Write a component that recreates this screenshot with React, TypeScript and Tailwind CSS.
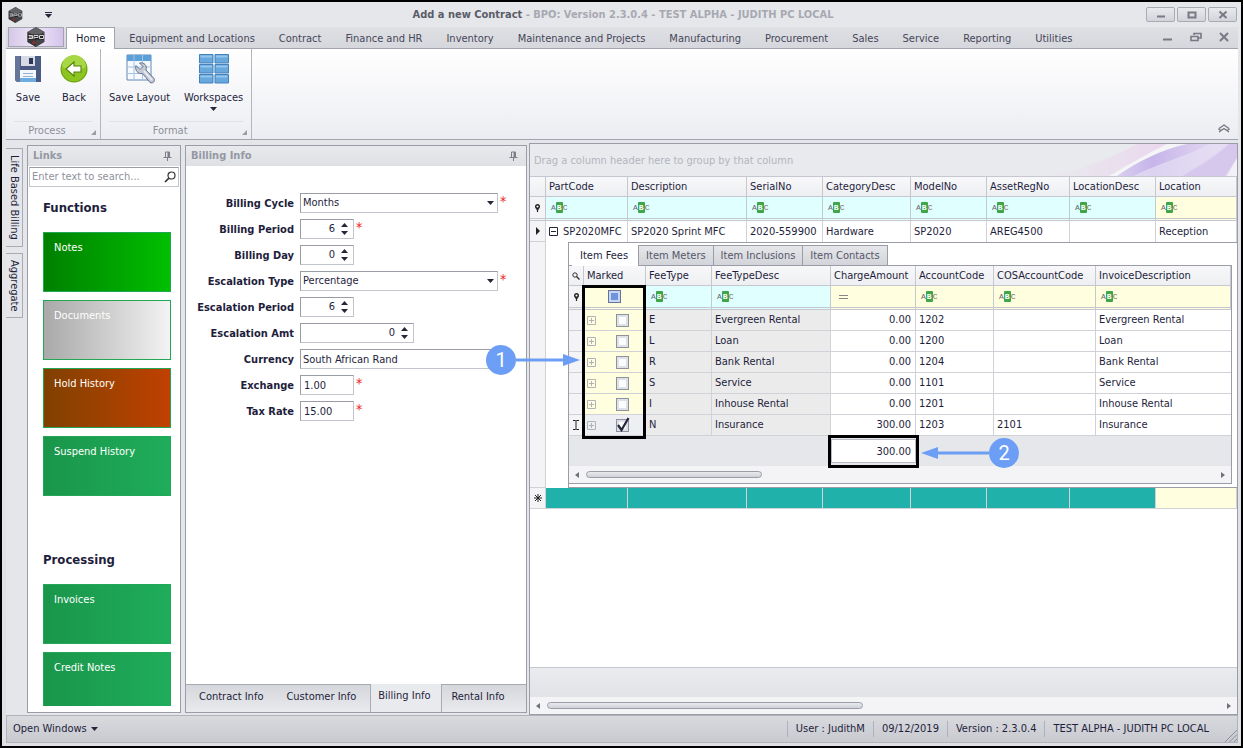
import { ReactNode, useState } from "react";
import clsx from "clsx";

const ribbonTabs = ["Equipment and Locations", "Contract", "Finance and HR", "Inventory", "Maintenance and Projects", "Manufacturing", "Procurement", "Sales", "Service", "Reporting", "Utilities"];

const functionTiles = [
    { label: "Notes", color: "from-[#008000] to-[#00c000]" },
    { label: "Documents", color: "from-[#a9a9a9] to-[#f3f3f3]" },
    { label: "Hold History", color: "from-[#804000] to-[#c04000]" },
    { label: "Suspend History", color: "from-[#1a964b] to-[#1fad5b]" },
];

const processingTiles = [
    { label: "Invoices", color: "from-[#1a964b] to-[#1fad5b]" },
    { label: "Credit Notes", color: "from-[#1a964b] to-[#1fad5b]" },
];

const itemColumns = [
    { name: "PartCode", width: "w-[82px]" },
    { name: "Description", width: "w-[119px]" },
    { name: "SerialNo", width: "w-[76px]" },
    { name: "CategoryDesc", width: "w-[88px]" },
    { name: "ModelNo", width: "w-[76px]" },
    { name: "AssetRegNo", width: "w-[83px]" },
    { name: "LocationDesc", width: "w-[86px]" },
    { name: "Location", width: "" },
];

const feeColumns = [
    { name: "FeeType", width: "w-[66px]" },
    { name: "FeeTypeDesc", width: "w-[119px]" },
    { name: "ChargeAmount", width: "w-[85px]" },
    { name: "AccountCode", width: "w-[78px]" },
    { name: "COSAccountCode", width: "w-[102px]" },
    { name: "InvoiceDescription", width: "" },
];

const fees = [
    { type: "E", desc: "Evergreen Rental", amount: "0.00", account: "1202", cos: "", marked: false },
    { type: "L", desc: "Loan", amount: "0.00", account: "1200", cos: "", marked: false },
    { type: "R", desc: "Bank Rental", amount: "0.00", account: "1204", cos: "", marked: false },
    { type: "S", desc: "Service", amount: "0.00", account: "1101", cos: "", marked: false },
    { type: "I", desc: "Inhouse Rental", amount: "0.00", account: "1201", cos: "", marked: false },
    { type: "N", desc: "Insurance", amount: "300.00", account: "1203", cos: "2101", marked: true },
];

const headBase = "h-5 border-r border-b border-[#c6c8d0] bg-linear-to-b from-[#f8f8fa] to-[#eeeff2]";
const headCell = clsx(headBase, "pl-[3px] text-left font-normal whitespace-nowrap overflow-hidden");
const filterCell = "h-6 border-r border-r-[#c6c8d0] border-b-3 border-b-[#c6c8d0] border-double";
const bodyBase = "h-[21px] border-r border-b border-[#d0d2d8]";
const bodyCell = clsx(bodyBase, "pl-[3px] pr-1 whitespace-nowrap");

const BpoLogo = ({ className }: { className: string }) => (
    <svg viewBox="0 0 18 20" className={className} aria-hidden="true">
        <path d="M9 0 17.5 5V15L9 20 .5 15V5Z" fill="#45454a" />
        <path d="M9 0 17.5 5 9 9.5 .5 5Z" fill="#626267" />
        <path d="M9 10V20L.5 15V5Z" fill="#38383c" />
        <path d="M1 7.5H17V12.5H1Z" fill="#222" />
        <path d="M1.5 8.5H5.5V11.5H1.5M2 10H5M7 12V8.5H11V10.5H7.5M12.5 8.5H16.5V11.5H12.5Z" fill="none" stroke="#e8e8e8" strokeWidth=".9" />
        <path d="M6 14 9 16M5 15.5 7.5 17" stroke="#b33" strokeWidth="1" />
    </svg>
);

const PinIcon = () => (
    <svg viewBox="0 0 9 10" className="w-[9px] h-2.5" aria-hidden="true">
        <path d="M2.5 1H6.5V6M2.5 1V6M.5 6.5H8.5M4.5 7V10" fill="none" stroke="#7c7e88" />
        <path d="M4.500 1H7V6H4.500Z" fill="#7c7e88" />
    </svg>
);

const Caret = ({ up = false, className = "" }: { up?: boolean; className?: string }) => (
    <svg viewBox="0 0 7 4" className={clsx("w-[7px] h-1", className)} aria-hidden="true">
        <path d={up ? "M0 4 3.5 0 7 4Z" : "M0 0H7L3.5 4Z"} fill="#26263a" />
    </svg>
);

const FilterPin = () => (
    <svg viewBox="0 0 7 8" className="w-[7px] h-2 mx-auto" aria-hidden="true">
        <circle cx="3.5" cy="2.5" r="1.8" fill="none" stroke="#222" strokeWidth="1.4" />
        <path d="M3.5 4V8M2 4.8H5" stroke="#222" strokeWidth="1.2" />
    </svg>
);

const AbcIcon = () => (
    <span className="flex items-center pl-[5px] font-['Liberation_Mono',monospace] text-[8px] leading-[11px] text-[#666]" aria-hidden="true">
        A<span className="bg-[#3fa549] text-white font-bold px-px rounded-[1px]">B</span>C
    </span>
);

const ExpandBox = ({ open = false, dim = false }: { open?: boolean; dim?: boolean }) => (
    <svg viewBox="0 0 9 9" className={clsx("w-[9px] h-[9px]", dim ? "text-[#b0b2b8]" : "text-[#26263a]")} aria-hidden="true">
        <path d={open ? "M.5.5H8.5V8.5H.5ZM2 4.5H7" : "M.5.5H8.5V8.5H.5ZM2 4.5H7M4.5 2V7"} fill="none" stroke="currentColor" />
    </svg>
);

const Tick = ({ label, defaultChecked }: { label: string; defaultChecked: boolean }) => (
    <span className="relative flex">
        <input type="checkbox" aria-label={label} defaultChecked={defaultChecked} className="peer appearance-none w-[13px] h-[13px] border border-[#8e929e] bg-[#fdfdfd] shadow-[inset_0_0_0_2px_#dfe1e8]" />
        <svg viewBox="0 0 14 15" className="hidden peer-checked:block absolute left-0 -top-0.5 w-3.5 h-[15px] pointer-events-none" aria-hidden="true">
            <path d="M2 8 5.5 13 12.5 1" fill="none" stroke="#26263a" strokeWidth="2.2" />
        </svg>
    </span>
);

const ScrollBar = ({ thumb }: { thumb: string }) => (
    <div className="flex items-center h-[17px] bg-[#f4f4f7] px-1.5 gap-[7px]">
        <svg viewBox="0 0 4 6" className="w-1 h-1.5" aria-hidden="true"><path d="M4 0V6L0 3Z" fill="#6f717b" /></svg>
        <div className="flex-1">
            <div className={clsx("h-[7px] rounded-full border border-[#9a9ca6] bg-linear-to-b from-[#e9eaee] to-[#d0d2d9]", thumb)} />
        </div>
        <svg viewBox="0 0 4 6" className="w-1 h-1.5" aria-hidden="true"><path d="M0 0V6L4 3Z" fill="#6f717b" /></svg>
    </div>
);

const PanelHeader = ({ title }: { title: string }) => (
    <div className="flex items-center justify-between h-5 pl-[5px] pr-2 bg-linear-to-b from-[#e9eaed] to-[#dfe0e4]">
        <h2 className="font-bold text-[#9598a3]">{title}</h2>
        <button type="button" aria-label={`Pin ${title}`}><PinIcon /></button>
    </div>
);

const Tile = ({ label, color }: { label: string; color: string }) => (
    <button type="button" className={clsx("flex h-15 w-full shrink-0 items-start border border-[#22a757] bg-linear-to-r px-2.5 py-[7px] text-left text-white", color)}>{label}</button>
);

const RibbonButton = ({ label, icon, menu = false }: { label: string; icon: ReactNode; menu?: boolean }) => (
    <button type="button" className="flex flex-col items-center h-16 whitespace-nowrap">
        <span className="flex h-8 items-center">{icon}</span>
        <span className="mt-[5px]">{label}</span>
        {menu && <Caret className="mt-px" />}
    </button>
);

const RibbonGroup = ({ title, children }: { title: string; children: ReactNode }) => (
    <div className="relative flex flex-col justify-between border-r border-[#b4b6be] pt-1">
        <div className="flex gap-3.5 px-2">{children}</div>
        <div className="mx-2 border-t border-[#e0e1e6] pr-3 text-center text-[#8d909b] leading-[17px]">{title}</div>
        <svg viewBox="0 0 5 5" className="absolute right-1 bottom-1 w-[5px] h-[5px]" aria-hidden="true"><path d="M5 0V5H0Z" fill="#9b9da6" /></svg>
    </div>
);

const Field = ({ id, label, required = false, children }: { id: string; label: string; required?: boolean; children: ReactNode }) => (
    <div className="flex items-center h-5">
        <label htmlFor={id} className="w-[108px] shrink-0 pt-0.5 text-right font-bold whitespace-nowrap">{label}</label>
        <div className="ml-1.5 flex">{children}</div>
        {required && <span className="ml-0.5 self-start text-sm leading-4 text-[#f02020]">*</span>}
    </div>
);

const fieldBox = "h-5 border border-[#c3c5cd] border-t-[#9a9ca6] border-l-[#9a9ca6] bg-white";

const SelectBox = ({ id, value }: { id: string; value: string }) => (
    <span className="relative flex items-center">
        <select id={id} defaultValue={value} className={clsx(fieldBox, "w-[198px] appearance-none pl-0.5")}>
            <option>{value}</option>
        </select>
        <Caret className="absolute right-1 pointer-events-none" />
    </span>
);

const SpinBox = ({ id, start, width }: { id: string; start: number; width: string }) => {
    const [value, setValue] = useState(start);
    return (
        <span className={clsx(fieldBox, "flex items-center", width)}>
            <input id={id} value={value} onChange={(e) => setValue(Number(e.target.value) || 0)} className="w-full min-w-0 text-right outline-none" />
            <span className="flex w-[18px] shrink-0 flex-col items-center gap-1">
                <button type="button" aria-label="Increase" onClick={() => setValue(value + 1)}><Caret up className="block" /></button>
                <button type="button" aria-label="Decrease" onClick={() => setValue(value - 1)}><Caret className="block" /></button>
            </span>
        </span>
    );
};

const TitleBar = () => (
    <header>
        <div className="grid h-[25px] grid-cols-[1fr_auto_1fr] items-center pl-0.5">
            <div className="flex items-center">
                <BpoLogo className="w-[15px] h-4" />
                <button type="button" aria-label="Customize toolbar" className="ml-5.5">
                    <svg viewBox="0 0 7 6" className="w-[7px] h-1.5" aria-hidden="true"><path d="M0 .5H7" stroke="#26263a" /><path d="M0 2H7L3.5 6Z" fill="#26263a" /></svg>
                </button>
            </div>
            <h1 className="font-bold text-[#a7a9b2]"><span className="text-[#5a5c68]">Add a new Contract</span> - BPO: Version 2.3.0.4 - TEST ALPHA - JUDITH PC LOCAL</h1>
            <div className="flex justify-end gap-0.5 pr-px text-[#777984]">
                {["M4 7.5H12", "M4.5 3.5H11.5V8.5H4.5Z", "M4.5 2.5 11.5 9M11.5 2.5 4.5 9"].map((d, i) => (
                    <button key={d} type="button" aria-label={["Minimize", "Maximize", "Close"][i]} className="flex h-[15px] w-[29px] items-center justify-center rounded-xs border border-[#a9abb4] bg-linear-to-b from-[#e9eaed] to-[#d3d4da]">
                        <svg viewBox="0 0 16 12" className="w-4 h-3"><path d={d} fill="none" stroke="currentColor" strokeWidth="2" /></svg>
                    </button>
                ))}
            </div>
        </div>
        <nav className="flex h-[22px] items-end border-b border-[#a3a5ae] bg-linear-to-b from-[#dfe0e4] to-[#d6d7dc] text-[#45465a]">
            <button type="button" aria-label="Application menu" className="mb-px ml-0.5 flex h-5 w-[56px] items-center justify-center border border-[#a3a5ae] bg-linear-to-r from-[#d5c8e8] via-[#efe6f8] to-[#d3c3ec]">
                <BpoLogo className="w-[18px] h-5" />
            </button>
            <a href="#home" className="-mb-px ml-0.5 h-[22px] border border-b-0 border-[#a3a5ae] bg-white px-[9px] leading-[22px] text-[#1e1e3c]">Home</a>
            {ribbonTabs.map((tab, i) => (
                <a key={tab} href={`#${i}`} className={clsx("px-3 leading-[18px] whitespace-nowrap", i === 0 && "ml-0.5")}>{tab}</a>
            ))}
            <div className="ml-auto mb-1.5 flex gap-4 pr-2 text-[#777984]">
                <button type="button" aria-label="Minimize window"><svg viewBox="0 0 12 10" className="w-3 h-2.5"><path d="M1 7.5H10" stroke="currentColor" strokeWidth="2" /></svg></button>
                <button type="button" aria-label="Restore window"><svg viewBox="0 0 12 10" className="w-3 h-2.5"><path d="M4 3V1.5H11V6H8.5M1 4.5H8V8.5H1Z" fill="none" stroke="currentColor" strokeWidth="1.6" /></svg></button>
                <button type="button" aria-label="Close window"><svg viewBox="0 0 12 10" className="w-3 h-2.5"><path d="M2 1 10 9M10 1 2 9" stroke="currentColor" strokeWidth="2" /></svg></button>
            </div>
        </nav>
    </header>
);

const Ribbon = () => (
    <section className="flex h-[91px] border-b border-[#a3a5ae] bg-linear-to-b from-white to-[#ecedf2]">
        <RibbonGroup title="Process">
            <RibbonButton label="Save" icon={
                <svg viewBox="0 0 28 28" className="w-7 h-7" aria-hidden="true">
                    <path d="M1 1H27V27H3L1 25Z" fill="#4a5a80" />
                    <path d="M1 1H6V27H3L1 25Z" fill="#65759a" />
                    <path d="M7 1H21V11H7Z" fill="#d5dae4" />
                    <path d="M15 3H19V9H15Z" fill="#2b3555" />
                    <path d="M6 15H22V27H6Z" fill="#f4f8fc" />
                    <path d="M6 23H22V27H6Z" fill="#6cacdf" />
                    <path d="M9 18.5H19M9 21.5H19" stroke="#8fb2d6" />
                </svg>
            } />
            <RibbonButton label="Back" icon={
                <svg viewBox="0 0 28 28" className="w-7 h-7 mx-1" aria-hidden="true">
                    <circle cx="14" cy="14" r="13.5" fill="#6fa312" />
                    <circle cx="14" cy="14" r="12.3" fill="#8cc520" />
                    <path d="M2 12A12 12 0 0 1 26 12C20 16 8 15 2 12Z" fill="#a7d843" />
                    <path d="M6 14 14 7V11H21V17H14V21Z" fill="#fff" stroke="#54800b" strokeWidth="1.1" />
                </svg>
            } />
        </RibbonGroup>
        <RibbonGroup title="Format">
            <RibbonButton label="Save Layout" icon={
                <svg viewBox="0 0 30 30" className="w-7.5 h-7.5" aria-hidden="true">
                    <path d="M2 1H26V26H2Z" fill="#f6f9fd" stroke="#6685b5" />
                    <path d="M2 1H26V7H2Z" fill="#5ba0d8" />
                    <path d="M2 13H26M2 19.5H26M9 1V26M17.5 1V26" stroke="#a5c2e2" />
                    <path d="M11 11.5 15 15.5 18 12.5 14.5 9C19 8 22.5 11.5 21 16L29 24.5C30.5 27 28 30 25 28.5L17.5 19.5C13 20.5 9.5 16 11 11.5Z" fill="#c3cad6" stroke="#65728a" />
                    <path d="M19 17 27 26" stroke="#eef1f5" strokeWidth="1.5" />
                </svg>
            } />
            <RibbonButton label="Workspaces" menu icon={
                <svg viewBox="0 0 30 30" className="w-7.5 h-7.5" aria-hidden="true">
                    {[0.5, 10.5, 20.5].map((y) => (
                        <g key={y} fill="#69a8dc" stroke="#4381bd">
                            <path d={`M.5 ${y}H14V${y + 8.5}H.5ZM16 ${y}H29.5V${y + 8.5}H16Z`} />
                            <path d={`M1.5 ${y + 2}H13M17 ${y + 2}H28.5`} stroke="#94c5ec" strokeWidth="2" />
                        </g>
                    ))}
                </svg>
            } />
        </RibbonGroup>
        <button type="button" aria-label="Collapse ribbon" className="ml-auto mr-2 mb-1.5 self-end">
            <svg viewBox="0 0 12 9" className="w-3 h-[9px]"><path d="M1 4.5 6 1 11 4.5M1 8 6 4.5 11 8M1 4.5V5.5L3 6M11 4.5V5.5L9 6" fill="none" stroke="#73757f" strokeWidth="1.2" /></svg>
        </button>
    </section>
);

const LinksPanel = () => (
    <aside className="my-0.5 flex w-[154px] shrink-0 flex-col border border-[#9a9ca8] bg-white">
        <PanelHeader title="Links" />
        <div className="mx-px mt-px flex h-5 items-center border border-[#c3c5cd] border-t-[#9a9ca6] pr-0.5">
            <input aria-label="Search links" placeholder="Enter text to search..." className="w-full min-w-0 px-0.5 outline-none placeholder:text-[#8f929c]" />
            <svg viewBox="0 0 12 12" className="w-3 h-3 shrink-0" aria-hidden="true"><circle cx="7.5" cy="4.5" r="3.5" fill="none" stroke="#333" strokeWidth="1.2" /><path d="M5 7 1 11" stroke="#333" strokeWidth="1.7" /></svg>
        </div>
        <div className="mb-1.5 flex min-h-0 flex-1 flex-col gap-2 overflow-hidden pt-[11px] pr-[9px] pl-[15px]">
            <h3 className="mb-1.5 shrink-0 text-[13px] leading-5 font-bold">Functions</h3>
            {functionTiles.map((tile) => <Tile key={tile.label} {...tile} />)}
            <h3 className="mt-[46px] mb-1.5 shrink-0 text-[13px] leading-5 font-bold">Processing</h3>
            {processingTiles.map((tile) => <Tile key={tile.label} {...tile} />)}
        </div>
    </aside>
);

const BillingPanel = () => (
    <section className="my-0.5 mr-0.5 ml-1 flex w-[342px] shrink-0 flex-col border border-[#9a9ca8] bg-white">
        <PanelHeader title="Billing Info" />
        <form className="flex flex-1 flex-col gap-1.5 pt-[27px]">
            <Field id="cycle" label="Billing Cycle" required><SelectBox id="cycle" value="Months" /></Field>
            <Field id="period" label="Billing Period" required><SpinBox id="period" start={6} width="w-[54px]" /></Field>
            <Field id="day" label="Billing Day"><SpinBox id="day" start={0} width="w-[54px]" /></Field>
            <Field id="esc-type" label="Escalation Type" required><SelectBox id="esc-type" value="Percentage" /></Field>
            <Field id="esc-period" label="Escalation Period"><SpinBox id="esc-period" start={6} width="w-[54px]" /></Field>
            <Field id="esc-amt" label="Escalation Amt"><SpinBox id="esc-amt" start={0} width="w-[114px]" /></Field>
            <Field id="currency" label="Currency"><input id="currency" defaultValue="South African Rand" className={clsx(fieldBox, "w-[198px] px-0.5")} /></Field>
            <Field id="exchange" label="Exchange" required><input id="exchange" defaultValue="1.00" className={clsx(fieldBox, "w-[54px] px-[3px]")} /></Field>
            <Field id="tax" label="Tax Rate" required><input id="tax" defaultValue="15.00" className={clsx(fieldBox, "w-[54px] px-[3px]")} /></Field>
        </form>
        <div className="flex h-7 bg-[#e9eaed]">
            <div className="flex border-t border-r border-[#a9abb4] bg-linear-to-b from-[#d6d7dc] to-[#e9eaed] pb-1">
                <button type="button" className="px-[13px]">Contract Info</button>
                <button type="button" className="pr-3.5 pl-2.5">Customer Info</button>
            </div>
            <button type="button" className="w-[70px] pr-1 pb-1">Billing Info</button>
            <div className="flex flex-1 border-t border-l border-[#a9abb4] bg-linear-to-b from-[#d6d7dc] to-[#e9eaed] pb-1">
                <button type="button" className="px-[9px]">Rental Info</button>
            </div>
        </div>
    </section>
);

const FeesTable = () => (
    <table className="w-full table-fixed border-separate border-spacing-0">
        <colgroup>
            <col className="w-[15px]" />
            <col className="w-[62px]" />
            {feeColumns.map((c) => <col key={c.name} className={c.width} />)}
        </colgroup>
        <thead>
            <tr>
                <th className={headBase} aria-label="Find">
                    <svg viewBox="0 0 8 8" className="w-2 h-2 mx-auto" aria-hidden="true"><circle cx="3" cy="3" r="2.2" fill="none" stroke="#333" /><path d="M4.5 4.5 7.5 7.5" stroke="#333" strokeWidth="1.4" /></svg>
                </th>
                <th className={headCell}>Marked</th>
                {feeColumns.map((c) => <th key={c.name} className={headCell}>{c.name}</th>)}
            </tr>
            <tr>
                <td className={clsx(filterCell, "bg-[#f4f4f7]")}><FilterPin /></td>
                <td className={clsx(filterCell, "bg-[#ffffe0]")}>
                    <input type="checkbox" aria-label="Filter marked" className="mx-auto block h-[13px] w-[13px] appearance-none border border-[#66749a] bg-[#6d94dc] shadow-[inset_0_0_0_2px_#c9d8f2]" />
                </td>
                {feeColumns.map((c, i) => (
                    <td key={c.name} className={clsx(filterCell, i < 2 ? "bg-[#e0ffff]" : "bg-[#ffffe0]")}>
                        {c.name === "ChargeAmount" ? (
                            <svg viewBox="0 0 9 4" className="ml-2 h-1 w-[9px]" aria-hidden="true"><path d="M0 .5H9M0 3.5H9" stroke="#85878c" /></svg>
                        ) : <AbcIcon />}
                    </td>
                ))}
            </tr>
        </thead>
        <tbody>
            {fees.map((fee) => (
                <tr key={fee.type}>
                    <td className={clsx(bodyBase, "bg-[#f4f4f7]")}>
                        {fee.marked && <svg viewBox="0 0 6 10" className="mx-auto w-1.5 h-2.5" aria-hidden="true"><path d="M0 .5H2.5L3 1 3.5 .5H6M3 1V9M0 9.5H2.5L3 9 3.5 9.5H6" fill="none" stroke="#222" /></svg>}
                    </td>
                    <td className={clsx(bodyCell, fee.marked ? "bg-[#eeeff2]" : "bg-[#ffffe0]")}>
                        <div className="flex items-center gap-5"><ExpandBox dim /><Tick label={`Mark ${fee.desc}`} defaultChecked={fee.marked} /></div>
                    </td>
                    <td className={clsx(bodyCell, "bg-[#ebebeb]")}>{fee.type}</td>
                    <td className={clsx(bodyCell, "bg-[#ebebeb]")}>{fee.desc}</td>
                    <td className={clsx(bodyCell, "bg-white text-right")}>{fee.amount}</td>
                    <td className={clsx(bodyCell, "bg-white")}>{fee.account}</td>
                    <td className={clsx(bodyCell, "bg-white")}>{fee.cos}</td>
                    <td className={clsx(bodyCell, "border-r-0 bg-white")}>{fee.desc}</td>
                </tr>
            ))}
        </tbody>
        <tfoot>
            <tr className="bg-[#e6e7eb]">
                <td colSpan={4} className="h-[30px]" />
                <td className="relative">
                    <div className="h-6 border border-[#b9bbc4] bg-white pr-1 text-right leading-6">300.00</div>
                    <div className="absolute -inset-x-[3px] -top-px -bottom-0.5 border-3 border-black" />
                </td>
                <td colSpan={3} />
            </tr>
        </tfoot>
    </table>
);

const calloutDot = "flex h-[30px] w-[30px] shrink-0 items-center justify-center rounded-full bg-[#6c9ef5] font-['Roboto',sans-serif] text-xl text-white";

const DetailView = () => (
    <div className="relative border-t border-b border-l border-[#9a9ca8] bg-white pt-0.5 pr-[5px] pb-[3px]">
        <div className="flex h-5 pl-[3px] text-[#55576a]">
            <button type="button" className="relative -mb-px h-[21px] border-r border-[#9a9ca8] bg-white pr-2.5 pl-2 text-[#1e1e3c]">Item Fees</button>
            {["Item Meters", "Item Inclusions", "Item Contacts"].map((tab) => (
                <button key={tab} type="button" className="border-t border-r border-[#9a9ca8] bg-linear-to-b from-[#e6e7ea] to-[#d3d4d9] px-[7px] whitespace-nowrap">{tab}</button>
            ))}
        </div>
        <div className="border border-l-0 border-[#9a9ca8]">
            <FeesTable />
            <ScrollBar thumb="w-[28%]" />
        </div>
        <div className="absolute top-[42px] left-[13px] h-[154px] w-16 border-3 border-black" />
        <div className="absolute top-[102px] -left-[83px] flex items-center">
            <span className={calloutDot}>1</span>
            <svg viewBox="0 0 64 12" className="w-16 h-3" aria-hidden="true"><path d="M0 6H50" stroke="#6c9ef5" strokeWidth="3" /><path d="M47 0 64 6 47 12Z" fill="#6c9ef5" /></svg>
        </div>
        <div className="absolute top-[195px] left-[352px] flex items-center">
            <svg viewBox="0 0 68 12" className="w-[68px] h-3" aria-hidden="true"><path d="M68 6H14" stroke="#6c9ef5" strokeWidth="3" /><path d="M17 0 0 6 17 12Z" fill="#6c9ef5" /></svg>
            <span className={calloutDot}>2</span>
        </div>
    </div>
);

const ItemsGrid = () => (
    <section className="flex min-w-0 flex-1 flex-col border border-[#9a9ca8] bg-white">
        <div className="relative flex h-[33px] items-center border-b border-[#c6c8d0] bg-[#e9eaed] pt-0.5 pl-1 text-[#b3b5be]">
            <svg viewBox="0 0 200 32" className="absolute right-0 bottom-0 w-[200px] h-8" aria-hidden="true">
                <defs>
                    <linearGradient id="pink"><stop offset="0" stopColor="#e9eaed" /><stop offset="1" stopColor="#ead6ee" /></linearGradient>
                    <linearGradient id="violet"><stop offset="0" stopColor="#d9cef0" /><stop offset=".3" stopColor="#c6b5e9" /><stop offset=".7" stopColor="#dcd0f0" /><stop offset="1" stopColor="#e6dcf2" /></linearGradient>
                </defs>
                <path d="M10 32C50 26 80 10 100 0H142C115 10 95 20 76 32Z" fill="url(#pink)" />
                <path d="M72 32C92 20 112 9 130 0H152C120 10 98 20 82 32Z" fill="#f5f5f8" />
                <path d="M80 32C100 18 125 5 150 0H200V32Z" fill="url(#violet)" />
                <path d="M96 32C120 20 150 12 172 0H190C175 14 160 22 146 32Z" fill="#e6dff4" opacity=".7" />
                <path d="M148 32C165 22 182 10 192 0H200V14L188 32Z" fill="#d6c7ec" />
                <path d="M190 32 200 14V32Z" fill="#f3f1f8" />
            </svg>
            <span className="relative">Drag a column header here to group by that column</span>
        </div>
        <table className="w-full table-fixed border-separate border-spacing-0">
            <colgroup>
                <col className="w-4" />
                {itemColumns.map((c) => <col key={c.name} className={c.width} />)}
            </colgroup>
            <thead>
                <tr>
                    <th className={headBase} aria-label="Row state" />
                    {itemColumns.map((c) => <th key={c.name} className={headCell}>{c.name}</th>)}
                </tr>
                <tr>
                    <td className={clsx(filterCell, "bg-[#f4f4f7]")}><FilterPin /></td>
                    {itemColumns.map((c) => (
                        <td key={c.name} className={clsx(filterCell, c.name === "Location" ? "bg-[#ffffe0]" : "bg-[#e0ffff]")}><AbcIcon /></td>
                    ))}
                </tr>
            </thead>
            <tbody>
                <tr>
                    <td className={clsx(bodyBase, "bg-[#f4f4f7]")}>
                        <svg viewBox="0 0 4 8" className="mx-auto w-1 h-2" aria-hidden="true"><path d="M0 0 4 4 0 8Z" fill="#222" /></svg>
                    </td>
                    <td className={clsx(bodyCell, "border-b-0")}>
                        <div className="flex items-center gap-[5px]"><ExpandBox open />SP2020MFC</div>
                    </td>
                    <td className={clsx(bodyCell, "border-b-0")}>SP2020 Sprint MFC</td>
                    <td className={clsx(bodyCell, "border-b-0")}>2020-559900</td>
                    <td className={clsx(bodyCell, "border-b-0")}>Hardware</td>
                    <td className={clsx(bodyCell, "border-b-0")}>SP2020</td>
                    <td className={clsx(bodyCell, "border-b-0")}>AREG4500</td>
                    <td className={clsx(bodyCell, "border-b-0")} />
                    <td className={clsx(bodyCell, "border-b-0")}>Reception</td>
                </tr>
                <tr>
                    <td className="border-r border-b border-[#d0d2d8] bg-[#f4f4f7]" />
                    <td colSpan={8} className="pl-[22px]"><DetailView /></td>
                </tr>
                <tr>
                    <td className={clsx(bodyBase, "bg-[#f4f4f7]")}>
                        <svg viewBox="0 0 8 8" className="mx-auto w-2 h-2" aria-hidden="true"><path d="M4 0V8M0 4H8M1 1 7 7M7 1 1 7" stroke="#222" /></svg>
                    </td>
                    {itemColumns.map((c) => (
                        <td key={c.name} className={clsx(bodyBase, c.name === "Location" ? "bg-[#ffffe0]" : "bg-[#20b2aa]")} />
                    ))}
                </tr>
            </tbody>
        </table>
        <div className="flex-1" />
        <div className="h-[30px] border-t border-[#c6c8d0] bg-linear-to-b from-[#eaebee] to-[#e2e3e7]" />
        <ScrollBar thumb="w-[47%]" />
    </section>
);

const StatusBar = () => (
    <footer className="flex h-7 items-center border border-[#b1b3bb] bg-linear-to-b from-[#d9dade] to-[#c9cad0] pl-1.5">
        <button type="button" className="flex items-center gap-1">Open Windows <Caret /></button>
        <div className="ml-auto flex items-center pr-2">
            {["User : JudithM", "09/12/2019", "Version : 2.3.0.4", "TEST ALPHA - JUDITH PC LOCAL"].map((text) => (
                <span key={text} className="border-l border-[#aeb0b8] px-2">{text}</span>
            ))}
        </div>
        <svg viewBox="0 0 12 12" className="mt-auto w-3 h-3" aria-hidden="true"><path d="M0 12 12 0M4.5 12 12 4.5M9 12 12 9" stroke="#8c8e98" /></svg>
    </footer>
);

const App = () => {
    return (
        <div className="flex h-screen flex-col border-2 border-black bg-linear-to-b from-[#e6e7ea] to-[#dfe0e4] pr-[3px] pb-[3px] pl-1 font-['DejaVu_Sans_Condensed','DejaVu_Sans',sans-serif] text-[11px] leading-4 text-[#1e1e3c]">
            <TitleBar />
            <Ribbon />
            <main className="flex min-h-0 flex-1 bg-[#e5e6ea] pt-[3px]">
                <div className="flex w-[21px] shrink-0 flex-col gap-1.5 pt-[5px]">
                    {["Life Based Billing", "Aggregate"].map((tab) => (
                        <button key={tab} type="button" className="w-[17px] border border-l-0 border-[#a9abb4] px-1.5 [writing-mode:vertical-rl] whitespace-nowrap">{tab}</button>
                    ))}
                </div>
                <LinksPanel />
                <BillingPanel />
                <ItemsGrid />
            </main>
            <StatusBar />
        </div>
    );
};

export default App;
